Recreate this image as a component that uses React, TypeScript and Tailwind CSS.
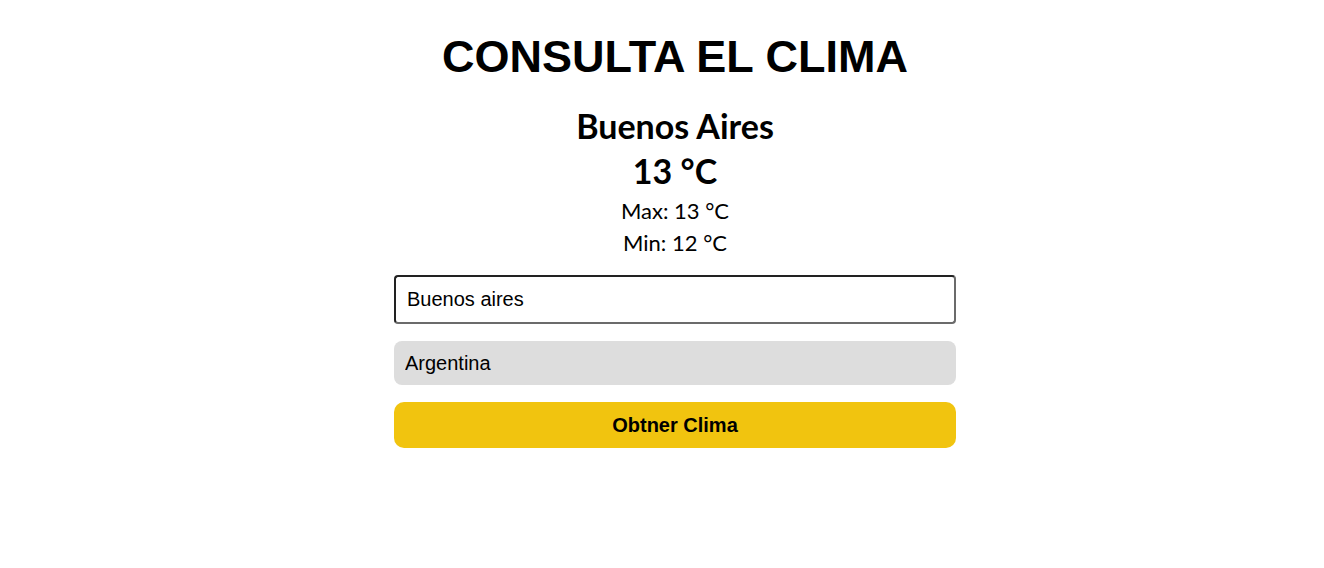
import React from "react";

export default function App() {
  return (
    <div className="w-[1324px] h-[568px] bg-white flex flex-col items-center pl-[26px]">
      <h1 className="mt-[30px] text-[45px] leading-[54px] font-bold text-black" style={{ fontFamily: '"Liberation Sans", Arial, sans-serif' }}>
        CONSULTA EL CLIMA
      </h1>
      <div className="mt-[19px] flex flex-col items-center text-black" style={{ fontFamily: 'Lato, sans-serif' }}>
        <div className="text-[34px] leading-[45px] font-bold">Buenos Aires</div>
        <div className="text-[34px] leading-[45px] font-bold mb-[2px]">13 °C</div>
        <div className="text-[22px] leading-[32px]">Max: 13 °C</div>
        <div className="text-[22px] leading-[32px]">Min: 12 °C</div>
      </div>
      <form className="mt-[16px] w-[562px] flex flex-col gap-[17px]" style={{ fontFamily: '"Liberation Sans", Arial, sans-serif' }} onSubmit={(e) => e.preventDefault()}>
        <input
          defaultValue="Buenos aires"
          className="h-[49px] w-full rounded-[4px] border-2 border-t-[#222] border-l-[#222] border-r-[#6b6b6b] border-b-[#6b6b6b] px-[11px] text-[20px] text-black outline-none"
        />
        <input
          defaultValue="Argentina"
          className="h-[44px] w-full rounded-[8px] bg-[#dddddd] px-[11px] text-[20px] text-black outline-none"
        />
        <button className="h-[46px] w-full rounded-[10px] bg-[#f1c40f] text-[20px] font-bold text-black">
          Obtner Clima
        </button>
      </form>
    </div>
  );
}
